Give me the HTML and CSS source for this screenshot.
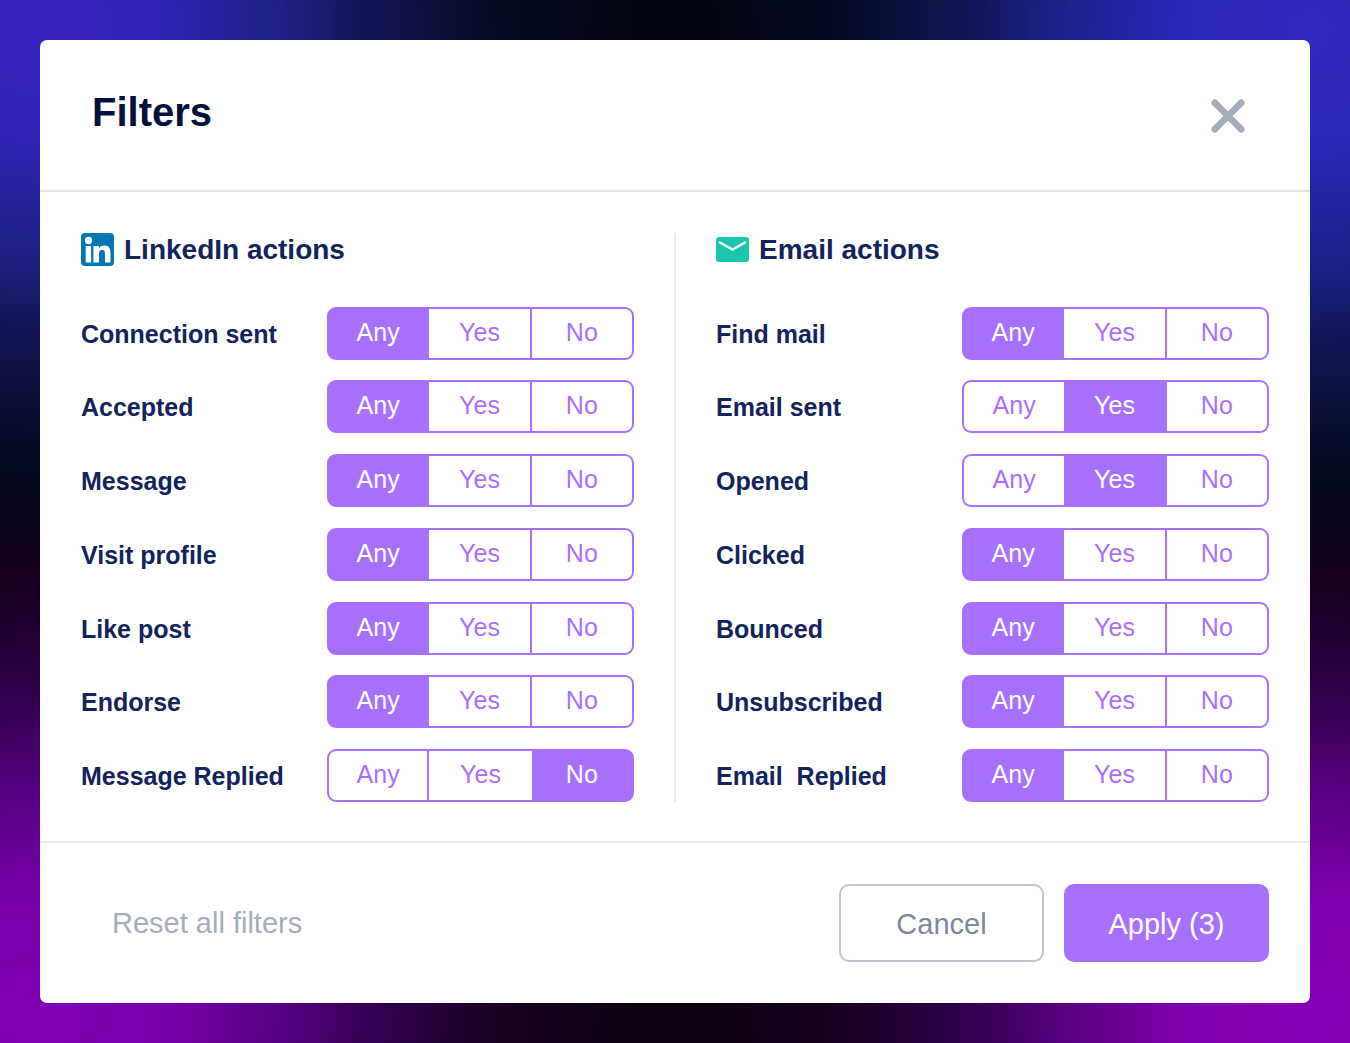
FILE: index.html
```html
<!DOCTYPE html>
<html lang="en">
<head>
<meta charset="utf-8">
<meta name="viewport" content="width=device-width, initial-scale=1">
<title>Filters</title>
<link rel="stylesheet" href="styles.css">
</head>
<body>
<form class="dialog">
  <header class="dialog-header">
    <h1 class="dialog-title">Filters</h1>
    <button class="close" type="button" aria-label="Close">
      <svg width="34" height="34" viewBox="0 0 34 34" fill="none" stroke="currentColor" stroke-width="6.600" stroke-linecap="round"><path d="M3.700 3.700 30.300 30.300M30.300 3.700 3.700 30.300"/></svg>
    </button>
  </header>
  <main class="dialog-body">
    <section class="group">
      <h2 class="group-title">
        <svg width="33" height="33" viewBox="0 0 33 33"><rect width="33" height="33" rx="4" fill="#0077b5"/><g fill="#fff"><circle cx="7.500" cy="7.500" r="3.700"/><path d="M4.700 13h5.400V29.500H4.700zM12.400 13h5.600v2.300c.9-1.700 2.800-2.800 5.300-2.800 5.200 0 6.200 3.400 6.200 8V29.500H24v-8c0-2.400-.1-4.400-2.800-4.400-2.700 0-3.200 2-3.200 4.300v8.100h-5.600z"/></g></svg>
        LinkedIn actions
      </h2>
      <div class="row" role="radiogroup" aria-labelledby="l1"><span class="row-label" id="l1">Connection sent</span><div class="segments"><label class="segment"><input type="radio" name="l1" checked>Any</label><label class="segment"><input type="radio" name="l1">Yes</label><label class="segment"><input type="radio" name="l1">No</label></div></div>
      <div class="row" role="radiogroup" aria-labelledby="l2"><span class="row-label" id="l2">Accepted</span><div class="segments"><label class="segment"><input type="radio" name="l2" checked>Any</label><label class="segment"><input type="radio" name="l2">Yes</label><label class="segment"><input type="radio" name="l2">No</label></div></div>
      <div class="row" role="radiogroup" aria-labelledby="l3"><span class="row-label" id="l3">Message</span><div class="segments"><label class="segment"><input type="radio" name="l3" checked>Any</label><label class="segment"><input type="radio" name="l3">Yes</label><label class="segment"><input type="radio" name="l3">No</label></div></div>
      <div class="row" role="radiogroup" aria-labelledby="l4"><span class="row-label" id="l4">Visit profile</span><div class="segments"><label class="segment"><input type="radio" name="l4" checked>Any</label><label class="segment"><input type="radio" name="l4">Yes</label><label class="segment"><input type="radio" name="l4">No</label></div></div>
      <div class="row" role="radiogroup" aria-labelledby="l5"><span class="row-label" id="l5">Like post</span><div class="segments"><label class="segment"><input type="radio" name="l5" checked>Any</label><label class="segment"><input type="radio" name="l5">Yes</label><label class="segment"><input type="radio" name="l5">No</label></div></div>
      <div class="row" role="radiogroup" aria-labelledby="l6"><span class="row-label" id="l6">Endorse</span><div class="segments"><label class="segment"><input type="radio" name="l6" checked>Any</label><label class="segment"><input type="radio" name="l6">Yes</label><label class="segment"><input type="radio" name="l6">No</label></div></div>
      <div class="row" role="radiogroup" aria-labelledby="l7"><span class="row-label" id="l7">Message Replied</span><div class="segments"><label class="segment"><input type="radio" name="l7">Any</label><label class="segment"><input type="radio" name="l7">Yes</label><label class="segment"><input type="radio" name="l7" checked>No</label></div></div>
    </section>
    <div class="divider"></div>
    <section class="group">
      <h2 class="group-title">
        <svg width="33" height="33" viewBox="0 0 33 33"><rect y="4" width="33" height="25" rx="3" fill="#19c5ab"/><path d="M4 9.500 16.500 16.500 29 9.500" fill="none" stroke="#fff" stroke-width="2.400" stroke-linecap="round"/></svg>
        Email actions
      </h2>
      <div class="row" role="radiogroup" aria-labelledby="e1"><span class="row-label" id="e1">Find mail</span><div class="segments"><label class="segment"><input type="radio" name="e1" checked>Any</label><label class="segment"><input type="radio" name="e1">Yes</label><label class="segment"><input type="radio" name="e1">No</label></div></div>
      <div class="row" role="radiogroup" aria-labelledby="e2"><span class="row-label" id="e2">Email sent</span><div class="segments"><label class="segment"><input type="radio" name="e2">Any</label><label class="segment"><input type="radio" name="e2" checked>Yes</label><label class="segment"><input type="radio" name="e2">No</label></div></div>
      <div class="row" role="radiogroup" aria-labelledby="e3"><span class="row-label" id="e3">Opened</span><div class="segments"><label class="segment"><input type="radio" name="e3">Any</label><label class="segment"><input type="radio" name="e3" checked>Yes</label><label class="segment"><input type="radio" name="e3">No</label></div></div>
      <div class="row" role="radiogroup" aria-labelledby="e4"><span class="row-label" id="e4">Clicked</span><div class="segments"><label class="segment"><input type="radio" name="e4" checked>Any</label><label class="segment"><input type="radio" name="e4">Yes</label><label class="segment"><input type="radio" name="e4">No</label></div></div>
      <div class="row" role="radiogroup" aria-labelledby="e5"><span class="row-label" id="e5">Bounced</span><div class="segments"><label class="segment"><input type="radio" name="e5" checked>Any</label><label class="segment"><input type="radio" name="e5">Yes</label><label class="segment"><input type="radio" name="e5">No</label></div></div>
      <div class="row" role="radiogroup" aria-labelledby="e6"><span class="row-label" id="e6">Unsubscribed</span><div class="segments"><label class="segment"><input type="radio" name="e6" checked>Any</label><label class="segment"><input type="radio" name="e6">Yes</label><label class="segment"><input type="radio" name="e6">No</label></div></div>
      <div class="row" role="radiogroup" aria-labelledby="e7"><span class="row-label" id="e7">Email&nbsp; Replied</span><div class="segments"><label class="segment"><input type="radio" name="e7" checked>Any</label><label class="segment"><input type="radio" name="e7">Yes</label><label class="segment"><input type="radio" name="e7">No</label></div></div>
    </section>
  </main>
  <footer class="dialog-footer">
    <button class="reset" type="reset">Reset all filters</button>
    <div class="actions">
      <button class="button button-outline" type="button">Cancel</button>
      <button class="button button-primary" type="submit">Apply (3)</button>
    </div>
  </footer>
</form>
</body>
</html>
```
FILE: styles.css
```css
* {
  box-sizing: border-box;
}

body {
  display: flex;
  min-height: 100vh;
  margin: 0;
  padding: 40px;
  font-family: "Liberation Sans", Arial, Helvetica, sans-serif;
  color: #13235b;
  background:
    radial-gradient(ellipse 44% 52% at 3% 3%, #3822c0 0%, #3223b8 18%, #20228e 37%, #101248 60%, #060a24 78%, transparent 100%),
    radial-gradient(ellipse 44% 52% at 97% 3%, #3027c0 0%, #2b28b8 20%, #1c2290 40%, #0e1448 62%, #050a24 80%, transparent 100%),
    radial-gradient(ellipse 44% 52% at 3% 97%, #8000b4 0%, #7800a8 22%, #560084 40%, #2c0044 61%, #160020 80%, transparent 100%),
    radial-gradient(ellipse 44% 52% at 97% 97%, #8600b4 0%, #7e00ac 22%, #5a0084 40%, #2c0044 61%, #160020 80%, transparent 100%),
    linear-gradient(#02040f, #0c0010);
}

button {
  border: 0;
  padding: 0;
  background: none;
  font: inherit;
  cursor: pointer;
}

.dialog {
  display: flex;
  flex: 1;
  flex-direction: column;
  background: #fff;
  border-radius: 7px;
}

.dialog-header {
  display: flex;
  align-items: flex-start;
  justify-content: space-between;
  padding: 48px 57px 54px 52px;
  border-bottom: 2px solid #e0e1e8;
}

.dialog-title {
  margin: 0;
  font-size: 40px;
  line-height: 48px;
  color: #02103c;
}

.close {
  display: flex;
  padding: 11px 8px 0;
  color: #a6adbb;
}

.dialog-body {
  display: grid;
  flex: 1;
  grid-template-columns: 1fr 2px 1fr;
  gap: 40px;
  padding: 41px 41px 39px;
}

.divider {
  background: #e9eaf0;
}

.group {
  display: flex;
  flex-direction: column;
  gap: 20px;
  justify-content: space-between;
}

.group-title {
  display: flex;
  align-items: center;
  gap: 10px;
  margin: 0 0 20px;
  font-size: 28px;
  line-height: 33px;
}

.row {
  display: flex;
  align-items: center;
  justify-content: space-between;
}

.row-label {
  padding-top: 2px;
  font-size: 25px;
  font-weight: bold;
}

.segments {
  display: grid;
  grid-template-columns: repeat(3, 1fr);
  width: 307px;
}

.segment {
  display: flex;
  justify-content: center;
  padding: 9px 0 12px;
  border: 2px solid #a770ff;
  border-left-width: 0;
  font-size: 25px;
  line-height: 28px;
  color: #a770ff;
  cursor: pointer;
}

.segment:first-child {
  border-left-width: 2px;
  border-radius: 9px 0 0 9px;
}

.segment:last-child {
  border-radius: 0 9px 9px 0;
}

.segment:has(:checked) {
  background: #a770ff;
  color: #fff;
}

.segment:has(+ .segment :checked) {
  border-right-width: 0;
}

.segment input {
  width: 0;
  height: 0;
  margin: 0;
  appearance: none;
}

.dialog-footer {
  display: flex;
  align-items: center;
  justify-content: space-between;
  padding: 41px;
  border-top: 2px solid #e9eaf0;
  font-size: 29px;
}

.reset {
  margin-left: 31px;
  color: #a6adbb;
}

.actions {
  display: flex;
  gap: 20px;
}

.button {
  width: 205px;
  padding: 21px 0 19px;
  border: 2px solid #a770ff;
  border-radius: 10px;
  line-height: 34px;
}

.button-outline {
  border-color: #c0c6d2;
  color: #7c889d;
}

.button-primary {
  background: #a770ff;
  color: #fff;
}
```
